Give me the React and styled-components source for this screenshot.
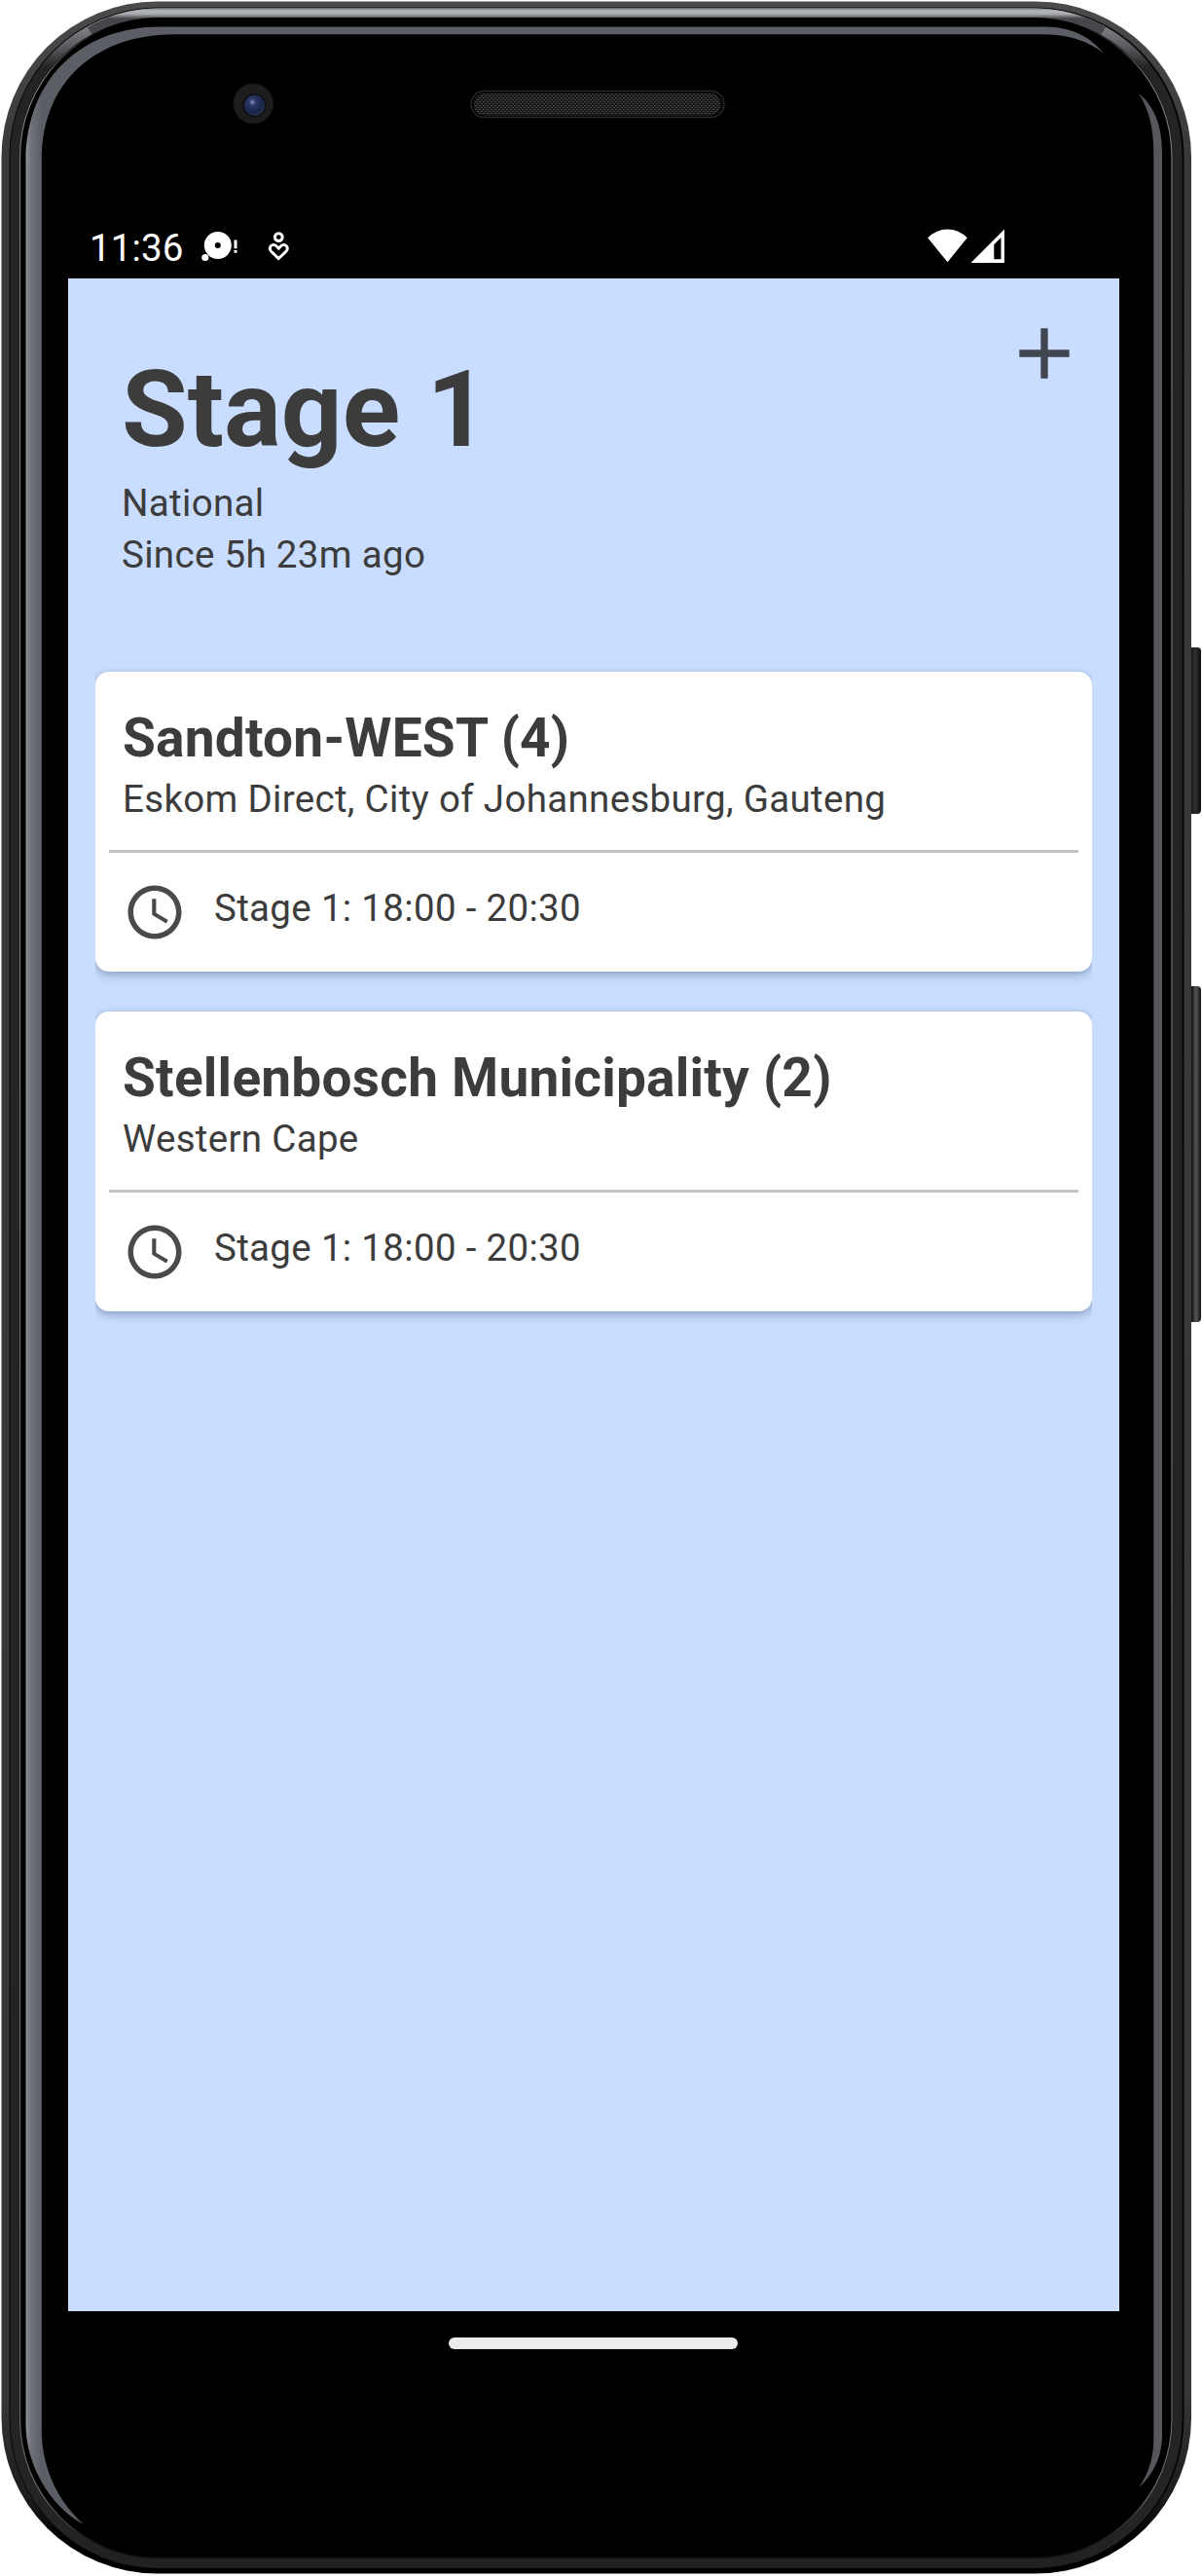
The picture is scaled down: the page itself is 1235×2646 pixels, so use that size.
import React from "react";
import styled, { createGlobalStyle } from "styled-components";

const GlobalStyle = createGlobalStyle`
  html, body { margin: 0; background: #ffffff; }
  * { box-sizing: border-box; }
`;

const Device = styled.div`
  position: relative;
  width: 1235px;
  height: 2646px;
  overflow: hidden;
  padding: 220px 85px 206px 70px;
  font-family: Roboto, "Liberation Sans", sans-serif;
`;

const Shell = styled.svg`
  position: absolute;
  inset: 0;
  display: block;
`;

const Display = styled.div`
  position: relative;
  display: flex;
  flex-direction: column;
  width: 1080px;
  height: 2220px;
  background: #000000;
`;

const StatusBar = styled.div`
  display: flex;
  align-items: center;
  flex: none;
  height: 66px;
  padding: 0 118px 0 22px;
  color: #ffffff;
`;

const Time = styled.span`
  width: 112px;
  padding-top: 3px;
  font-size: 38.5px;
  line-height: 44px;
  letter-spacing: 0.1px;
`;

const NotificationIcons = styled.svg`
  display: block;
  flex: none;
`;

const SignalIcons = styled.svg`
  display: block;
  flex: none;
  margin-left: auto;
`;

const Screen = styled.main`
  display: flex;
  flex-direction: column;
  flex: none;
  height: 2088px;
  background: #c8ddff;
  color: #3c3c3c;
`;

const Header = styled.header`
  display: flex;
  justify-content: space-between;
  align-items: flex-start;
  height: 404px;
  padding: 33px 33px 0 55px;
`;

const Summary = styled.div`
  padding-top: 37px;
`;

const StageTitle = styled.h1`
  margin: 0 0 5px;
  font-size: 110px;
  line-height: 129px;
  font-weight: 700;
`;

const Detail = styled.p`
  margin: 0;
  font-size: 38.5px;
  line-height: 53px;
  letter-spacing: 0.32px;
`;

const AddButton = styled.button`
  width: 88px;
  height: 88px;
  padding: 0;
  border: 0;
  background: none;
  color: #3f4650;
`;

const CardList = styled.section`
  display: flex;
  flex-direction: column;
  gap: 41px;
  padding: 0 28px;
`;

const CardClip = styled.div`
  clip-path: inset(-20px 0);
`;

const Card = styled.article`
  height: 308px;
  padding: 0 14px;
  border-radius: 14px;
  background: #ffffff;
  box-shadow: 0 4px 10px rgba(30, 50, 90, 0.3), 0 0 4px rgba(30, 50, 90, 0.1);
`;

const CardHeading = styled.div`
  height: 183px;
  padding: 36px 14px 0;
`;

const AreaName = styled.h2`
  margin: 0 0 3px;
  font-size: 55px;
  line-height: 65px;
  font-weight: 700;
  letter-spacing: 0.22px;
`;

const Divider = styled.hr`
  height: 3px;
  margin: 0;
  border: 0;
  background: #c4c4c4;
`;

const Slot = styled.div`
  display: flex;
  align-items: flex-start;
  gap: 28px;
  padding: 28px 14px 0;
`;

const ClockIcon = styled.svg`
  flex: none;
  color: #4a4a4a;
`;

const SlotText = styled.span`
  font-size: 38.5px;
  line-height: 57px;
  letter-spacing: 0.32px;
`;

const NavBar = styled.nav`
  display: flex;
  flex: none;
  justify-content: center;
  height: 66px;
  padding: 27px 1px 0 0;
`;

const HomePill = styled.div`
  width: 297px;
  height: 12px;
  border-radius: 6px;
  background: #ebebeb;
`;

function PhoneShell() {
  return (
    <Shell width="1235" height="2646" viewBox="0 0 1235 2646" fill="none">
      <defs>
        <linearGradient id="body" gradientUnits="userSpaceOnUse" x1="0" y1="0" x2="0" y2="2646">
          <stop offset="0" stopColor="#4c4b4c" />
          <stop offset="0.06" stopColor="#3a3838" />
          <stop offset="0.93" stopColor="#383637" />
          <stop offset="0.97" stopColor="#1c1c1c" />
          <stop offset="0.985" stopColor="#000" />
        </linearGradient>
        <linearGradient id="rim" gradientUnits="userSpaceOnUse" x1="0" y1="0" x2="0" y2="2646">
          <stop offset="0.003" stopColor="#a9acb1" />
          <stop offset="0.009" stopColor="#84868b" />
          <stop offset="0.018" stopColor="#5a5c60" />
          <stop offset="0.026" stopColor="#232425" />
          <stop offset="0.98" stopColor="#242424" />
          <stop offset="1" stopColor="#202020" />
        </linearGradient>
        <linearGradient id="topShine" gradientUnits="userSpaceOnUse" x1="0" y1="8" x2="0" y2="19">
          <stop offset="0" stopColor="#77797d" />
          <stop offset="0.3" stopColor="#b4b6ba" />
          <stop offset="0.6" stopColor="#a4a7ab" />
          <stop offset="1" stopColor="#45464a" />
        </linearGradient>
        <linearGradient id="glass" gradientUnits="userSpaceOnUse" x1="26" y1="0" x2="43" y2="0">
          <stop offset="0" stopColor="#919397" />
          <stop offset="0.35" stopColor="#6e7278" />
          <stop offset="1" stopColor="#5c5e65" />
        </linearGradient>
        <linearGradient id="hairline" gradientUnits="userSpaceOnUse" x1="0" y1="0" x2="0" y2="2646">
          <stop offset="0.01" stopColor="#000" />
          <stop offset="0.03" stopColor="#777" />
          <stop offset="0.97" stopColor="#666" />
          <stop offset="0.99" stopColor="#111" />
        </linearGradient>
        <linearGradient id="key" x1="0" y1="0" x2="1" y2="0">
          <stop offset="0" stopColor="#050505" />
          <stop offset="0.3" stopColor="#191919" />
          <stop offset="0.6" stopColor="#555" />
          <stop offset="1" stopColor="#111" />
        </linearGradient>
        <linearGradient id="keyDark" x1="0" y1="0" x2="1" y2="0">
          <stop offset="0" stopColor="#050505" />
          <stop offset="0.55" stopColor="#303030" />
          <stop offset="1" stopColor="#0c0c0c" />
        </linearGradient>
        <radialGradient id="lens" cx="0.4" cy="0.35" r="0.65">
          <stop offset="0" stopColor="#8490ba" />
          <stop offset="0.25" stopColor="#2c3869" />
          <stop offset="0.75" stopColor="#1a2448" />
          <stop offset="1" stopColor="#28304a" />
        </radialGradient>
        <pattern id="mesh" width="4" height="4" patternUnits="userSpaceOnUse">
          <rect width="4" height="4" fill="#161717" />
          <rect width="2" height="1" fill="#4b4d4d" />
          <rect x="2" y="2" width="2" height="1" fill="#4b4d4d" />
        </pattern>
      </defs>
      <rect x="1221" y="665" width="13" height="171" rx="4" fill="url(#keyDark)" />
      <rect x="1221" y="1013" width="13" height="345" rx="4" fill="url(#key)" />
      <rect x="1.5" y="1.5" width="1222.5" height="2642" rx="160" fill="url(#body)" />
      <rect x="9.5" y="7.5" width="1207" height="2631" rx="153" fill="#050505" />
      <rect x="10.5" y="8.5" width="1204" height="2629.5" rx="152" fill="url(#rim)" />
      <path d="M90 28 Q124 8.5 164 8.5 H1062 Q1102 8.5 1136 28 L1130 38 Q1102 19 1062 19 H164 Q124 19 96 38 Z" fill="url(#topShine)" />
      <rect x="19.5" y="18" width="1185.5" height="2610" rx="143" fill="#000" />
      <rect x="20.5" y="19" width="1183.5" height="2608.5" rx="142" stroke="url(#hairline)" strokeWidth="1.3" />
      <path d="M26.5 2490 V166 C26.5 80 85 27.5 165 27.5 H1075 C1100 28 1120 37 1134 55 C1118 42 1098 35.3 1070 35.3 H180 C100 35.3 42.8 82 42.8 165 V2500 C44 2535 58 2568 86 2593 C50 2574 26.5 2530 26.5 2490 Z" fill="url(#glass)" />
      <path d="M1170 96 C1187 110 1194 130 1194 158 V2505 C1193 2525 1184 2543 1170 2555 C1179 2542 1185 2528 1185.3 2505 V158 C1185.3 130 1180 112 1170 96 Z" fill="#56575d" />
      <circle cx="260.3" cy="106.5" r="20.5" fill="#1d1d1e" stroke="#121213" />
      <circle cx="261.3" cy="108.3" r="12" fill="#090a0d" />
      <circle cx="261.5" cy="108.2" r="10.7" fill="url(#lens)" />
      <rect x="484" y="93.5" width="260" height="27" rx="13.5" fill="#050505" stroke="#252628" strokeWidth="1.5" />
      <rect x="487" y="96" width="253.5" height="22.5" rx="11" fill="url(#mesh)" />
    </Shell>
  );
}

function Notifications() {
  return (
    <NotificationIcons width="100" height="44" viewBox="204 231 100 44">
      <path fillRule="evenodd" fill="#fff" d="M223.8 238a14 14 0 1 1 0 28 14 14 0 0 1 0-28Zm0 11a3 3 0 1 0 0 6 3 3 0 0 0 0-6Z" />
      <circle cx="210.8" cy="264.5" r="3.6" fill="#fff" />
      <path d="M240.5 246.5h3v8.7h-3zM240.5 257h3v2.8h-3z" fill="#fff" />
      <g fill="none" stroke="#fff" strokeWidth="2.9">
        <circle cx="286.3" cy="243.6" r="3.9" />
        <path d="M286.3 265.6 L278.9 258.6 C274.8 254 280.2 249.2 283.8 252.6 L286.3 255.2 L288.8 252.6 C292.4 249.2 297.8 254 293.7 258.6 Z" />
      </g>
    </NotificationIcons>
  );
}

function Signals() {
  return (
    <SignalIcons width="80" height="44" viewBox="952 231 80 44">
      <path d="M953.2 244.3Q962 235.4 973.5 235.4T993.8 244.3L973.5 269.2Z" fill="#fff" />
      <path fillRule="evenodd" d="M1032 235.5V270H997.5ZM1028.5 244L1021.3 251.2V266.3H1028.5Z" fill="#fff" />
    </SignalIcons>
  );
}

const areas = [
  {
    name: "Sandton-WEST (4)",
    region: "Eskom Direct, City of Johannesburg, Gauteng",
    slot: "Stage 1: 18:00 - 20:30",
  },
  {
    name: "Stellenbosch Municipality (2)",
    region: "Western Cape",
    slot: "Stage 1: 18:00 - 20:30",
  },
];

function AreaCard({ area }) {
  return (
    <CardClip>
      <Card>
        <CardHeading>
          <AreaName>{area.name}</AreaName>
          <Detail>{area.region}</Detail>
        </CardHeading>
        <Divider />
        <Slot>
          <ClockIcon width="66" height="66" viewBox="0 0 24 24" fill="currentColor">
            <path d="M11.99 2C6.47 2 2 6.48 2 12s4.47 10 9.99 10C17.52 22 22 17.52 22 12S17.52 2 11.99 2zM12 20c-4.42 0-8-3.58-8-8s3.58-8 8-8 8 3.58 8 8-3.58 8-8 8z" />
            <path d="M12.5 7H11v6l5.25 3.15.75-1.23-4.5-2.67z" />
          </ClockIcon>
          <SlotText>{area.slot}</SlotText>
        </Slot>
      </Card>
    </CardClip>
  );
}

export default function App() {
  return (
    <>
      <GlobalStyle />
      <Device>
        <PhoneShell />
        <Display>
          <StatusBar>
            <Time>11:36</Time>
            <Notifications />
            <Signals />
          </StatusBar>
          <Screen>
            <Header>
              <Summary>
                <StageTitle>Stage 1</StageTitle>
                <Detail>National</Detail>
                <Detail>Since 5h 23m ago</Detail>
              </Summary>
              <AddButton aria-label="Add area">
                <svg width="88" height="88" viewBox="0 0 24 24" fill="currentColor">
                  <path d="M19 13h-6v6h-2v-6H5v-2h6V5h2v6h6v2z" />
                </svg>
              </AddButton>
            </Header>
            <CardList>
              {areas.map((area) => (
                <AreaCard key={area.name} area={area} />
              ))}
            </CardList>
          </Screen>
          <NavBar>
            <HomePill />
          </NavBar>
        </Display>
      </Device>
    </>
  );
}
